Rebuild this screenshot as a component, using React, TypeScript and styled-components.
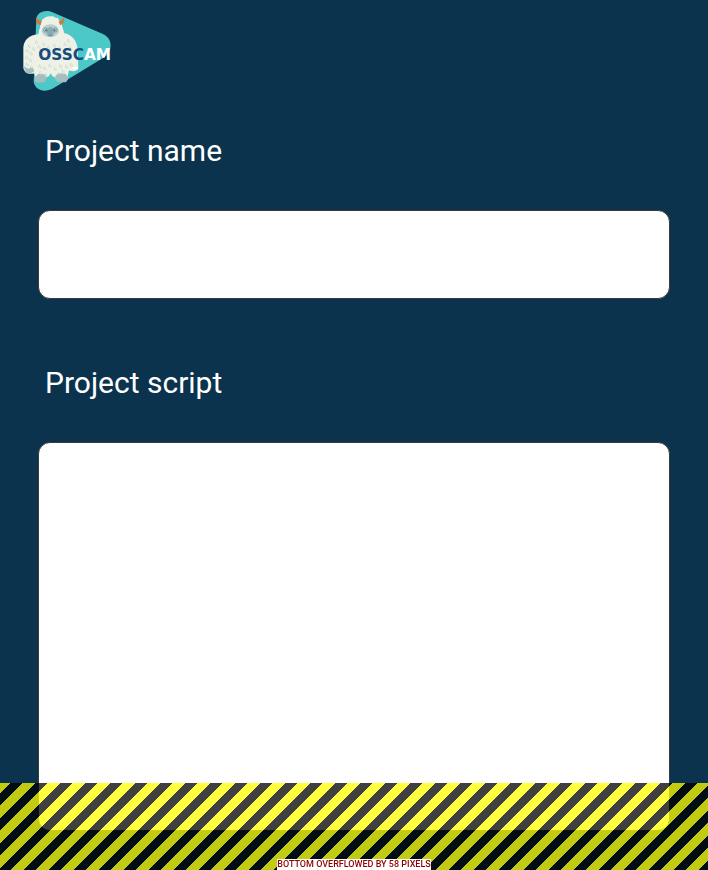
import React from "react";
import styled, { createGlobalStyle, css } from "styled-components";

const GlobalStyle = createGlobalStyle`
  *, *::before, *::after { box-sizing: border-box; }
  html, body, #root { height: 100%; }
  body {
    margin: 0;
    background: #0b334d;
    color: #ffffff;
    font-family: Roboto, "Liberation Sans", sans-serif;
  }
`;

const Screen = styled.div`
  height: 100vh;
  overflow: hidden;
`;

const Header = styled.header`
  padding: 5px 15px 0;
`;

const Logo = styled.svg`
  display: block;
  width: 105px;
  height: 95px;
`;

const Form = styled.form`
  display: flex;
  flex-direction: column;
  gap: 65px;
  padding: 32px 38px 0;
`;

const Field = styled.div`
  display: flex;
  flex-direction: column;
  gap: 40px;
`;

const Label = styled.label`
  padding-left: 7px;
  font-size: 30px;
  line-height: 38px;
`;

const control = css`
  display: block;
  width: 100%;
  padding: 16px;
  border: 1px solid #3a3a3a;
  border-radius: 12px;
  outline: none;
  background: #ffffff;
  color: #111111;
  font: inherit;
  font-size: 20px;
`;

const TextInput = styled.input`
  ${control}
  height: 89px;
`;

const TextArea = styled.textarea`
  ${control}
  height: 389px;
  resize: none;
`;

const OverflowStrip = styled.div`
  position: fixed;
  right: 0;
  bottom: 0;
  left: 0;
  display: flex;
  align-items: flex-end;
  justify-content: center;
  height: 10vh;
  pointer-events: none;
  background: linear-gradient(
      135deg,
      rgba(255, 255, 0, 0.75) 21%,
      rgba(0, 0, 0, 0.75) 21% 46%,
      rgba(255, 255, 0, 0.75) 46% 71%,
      rgba(0, 0, 0, 0.75) 71% 96%,
      rgba(255, 255, 0, 0.75) 96%
    )
    0 0 / 25px 25px;
`;

const OverflowText = styled.span`
  background: #ffffff;
  color: #900000;
  font-size: 9px;
  font-weight: 500;
  line-height: 11px;
  white-space: nowrap;
`;

const tufts = [
  [42, 118], [36, 132], [48, 140], [34, 152], [46, 160], [36, 172], [48, 182],
  [64, 106], [72, 120], [86, 112], [100, 122], [118, 116], [134, 124], [150, 112],
  [164, 122], [74, 178], [88, 184], [104, 176], [120, 186], [136, 178], [76, 198],
  [92, 204], [130, 202], [144, 194], [154, 180], [168, 174], [56, 126], [160, 102],
];

function OsscamLogo() {
  return (
    <Logo viewBox="0 0 315 285" role="img" aria-label="OSSCAM">
      <path
        fill="#4dc8c8"
        d="M64 42C66 20 94 12 116 23L262 86C284 95 292 116 284 136C280 148 272 155 258 163L116 249C88 265 62 256 56 232Z"
      />
      <path
        fill="#eef1e6"
        d="M76 62C77 46 89 34 104 34C124 34 139 47 142 66L147 84C171 89 184 105 188 131L190 190C186 199 174 202 162 196L157 218L124 220L107 211L91 219L62 218L58 205C42 210 27 203 25 188L25 127C27 105 43 90 69 88L73 82Z"
      />
      <path
        fill="#eef1e6"
        d="M78 57L83 43L90 44L96 35L105 39L112 32L119 39L128 38L132 47L140 49L141 65L146 80L139 95L128 100L112 104L91 100L77 91L71 82Z"
      />
      <path fill="#4dc8c8" d="M107 205L92 230L123 230Z" />
      <path
        fill="#a7bec1"
        d="M62 213L70 207L90 208L94 218L91 231L66 233L57 226ZM122 211L133 205L153 207L160 221L153 232L127 231L120 221ZM26 184L40 191L53 187L58 198L47 207L32 203Z"
      />
      <path
        fill="#cb793c"
        d="M65 36C59 47 65 59 77 60L80 48C73 48 69 44 65 36ZM146 36C151 47 146 59 135 60L131 48C139 48 143 44 146 36Z"
      />
      <ellipse cx="106" cy="77" rx="26" ry="19" fill="#b8cecd" />
      <ellipse cx="106" cy="81" rx="11" ry="15" fill="#88aab3" />
      <g fill="#d5e0db" stroke="#7199a5" strokeWidth="3">
        <circle cx="92" cy="75" r="6" />
        <circle cx="120" cy="75" r="6" />
      </g>
      <g fill="#426b7a">
        <circle cx="93" cy="76" r="3" />
        <circle cx="119" cy="76" r="3" />
      </g>
      <path fill="none" stroke="#5d8795" strokeWidth="2" d="M100 91Q106 87 113 91" />
      <g fill="none" stroke="#b9cac4" strokeWidth="2">
        {tufts.map(([x, y]) => (
          <path key={`${x}-${y}`} d={`M${x} ${y}l-3 9m7-4l-2 7`} />
        ))}
      </g>
      <path fill="#ffffff" d="M172 191L176 184L180 188L185 184L190 192L181 194Z" />
      <text
        x="70"
        y="166"
        fontFamily="'DejaVu Sans', sans-serif"
        fontWeight="700"
        fontSize="46"
        fill="#174b7c"
      >
        OSSC<tspan fill="#ffffff">AM</tspan>
      </text>
    </Logo>
  );
}

export default function App() {
  return (
    <>
      <GlobalStyle />
      <Screen>
        <Header>
          <OsscamLogo />
        </Header>
        <Form>
          <Field>
            <Label htmlFor="project-name">Project name</Label>
            <TextInput id="project-name" type="text" />
          </Field>
          <Field>
            <Label htmlFor="project-script">Project script</Label>
            <TextArea id="project-script" />
          </Field>
        </Form>
        <OverflowStrip>
          <OverflowText>BOTTOM OVERFLOWED BY 58 PIXELS</OverflowText>
        </OverflowStrip>
      </Screen>
    </>
  );
}
